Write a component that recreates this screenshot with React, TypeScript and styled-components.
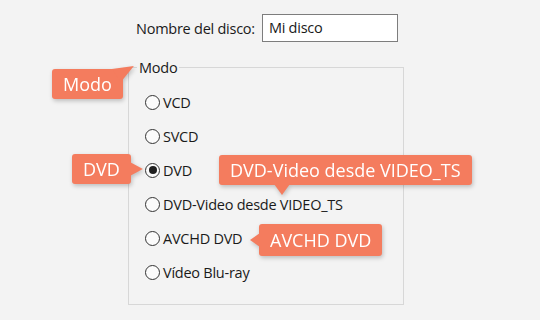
import React from "react";
import styled, { createGlobalStyle, css } from "styled-components";

const Global = createGlobalStyle`
  html, body { margin: 0; padding: 0; background: #f3f3f3; }
  body { font-family: "Open Sans", "Noto Sans", sans-serif; }
`;

const Page = styled.div`
  position: relative;
  width: 540px;
  height: 320px;
  overflow: hidden;
  background: #f3f3f3;
  color: #1a1a1a;
  font-family: "Open Sans", "Noto Sans", sans-serif;
  font-size: 14.5px;
  letter-spacing: -0.25px;
`;

const NameRow = styled.div`
  display: flex;
  align-items: center;
  gap: 7px;
  padding: 14px 0 0 136px;
`;

const Label = styled.label`
  white-space: nowrap;
`;

const TextBox = styled.div`
  box-sizing: border-box;
  width: 136px;
  height: 28px;
  border: 1px solid #7d7d7d;
  background: #ffffff;
  padding: 3px 6px;
  line-height: 19px;
`;

const Group = styled.fieldset`
  box-sizing: border-box;
  margin: 16px 0 0 128px;
  width: 276px;
  height: 247px;
  padding: 0;
  border: 1px solid #d7d7d7;
`;

const Legend = styled.legend`
  margin-left: 8px;
  padding: 0 2px;
  line-height: 19px;
`;

const RadioList = styled.div`
  display: grid;
  grid-auto-rows: 34px;
  padding: 8px 0 0 16px;
`;

const RadioRow = styled.div`
  display: flex;
  align-items: center;
  gap: 3px;
  white-space: nowrap;
`;

const Circle = styled.span<{ $checked?: boolean }>`
  box-sizing: border-box;
  width: 15px;
  height: 15px;
  border-radius: 50%;
  border: 1.3px solid #333333;
  background: #fbfbfb;
  display: flex;
  align-items: center;
  justify-content: center;
  ${(p) =>
    p.$checked &&
    css`
      &::after {
        content: "";
        width: 8px;
        height: 8px;
        border-radius: 50%;
        background: #1e1e1e;
      }
    `}
`;

type Tail = "topright" | "right" | "bottom" | "left";

const tailCss: Record<Tail, ReturnType<typeof css>> = {
  topright: css`
    right: -11px;
    top: -3px;
    width: 22px;
    height: 16px;
    clip-path: polygon(0 3px, 100% 0, 9px 100%);
  `,
  right: css`
    right: -12px;
    top: 50%;
    margin-top: -7px;
    width: 13px;
    height: 14px;
    clip-path: polygon(0 0, 100% 50%, 0 100%);
  `,
  bottom: css`
    left: 55px;
    bottom: -10px;
    width: 16px;
    height: 11px;
    clip-path: polygon(0 0, 100% 0, 50% 100%);
  `,
  left: css`
    left: -9px;
    top: 50%;
    margin-top: -7px;
    width: 10px;
    height: 14px;
    clip-path: polygon(100% 0, 0 50%, 100% 100%);
  `,
};

const Callout = styled.div<{ $x: number; $y: number; $h?: number; $tail: Tail }>`
  position: absolute;
  left: ${(p) => p.$x}px;
  top: ${(p) => p.$y}px;
  height: ${(p) => p.$h ?? 30}px;
  line-height: ${(p) => p.$h ?? 30}px;
  padding: 0 11px;
  background: #f47c5e;
  color: #ffffff;
  border-radius: 3px;
  font-family: "Open Sans", "Noto Sans", sans-serif;
  font-size: 18px;
  letter-spacing: 0;
  white-space: nowrap;
  filter: drop-shadow(1px 2px 2px rgba(0, 0, 0, 0.22));
  &::after {
    content: "";
    position: absolute;
    background: #f47c5e;
    ${(p) => tailCss[p.$tail]}
  }
`;

const options = [
  "VCD",
  "SVCD",
  "DVD",
  "DVD-Video desde VIDEO_TS",
  "AVCHD DVD",
  "Vídeo Blu-ray",
];

export default function App() {
  return (
    <Page>
      <Global />
      <NameRow>
        <Label>Nombre del disco:</Label>
        <TextBox>Mi disco</TextBox>
      </NameRow>
      <Group>
        <Legend>Modo</Legend>
        <RadioList>
          {options.map((o) => (
            <RadioRow key={o}>
              <Circle $checked={o === "DVD"} />
              <span>{o}</span>
            </RadioRow>
          ))}
        </RadioList>
      </Group>
      <Callout $x={52} $y={69} $tail="topright">Modo</Callout>
      <Callout $x={72} $y={154} $tail="right">DVD</Callout>
      <Callout $x={219} $y={155} $tail="bottom">DVD-Video desde VIDEO_TS</Callout>
      <Callout $x={259} $y={224} $h={32} $tail="left">AVCHD DVD</Callout>
    </Page>
  );
}
